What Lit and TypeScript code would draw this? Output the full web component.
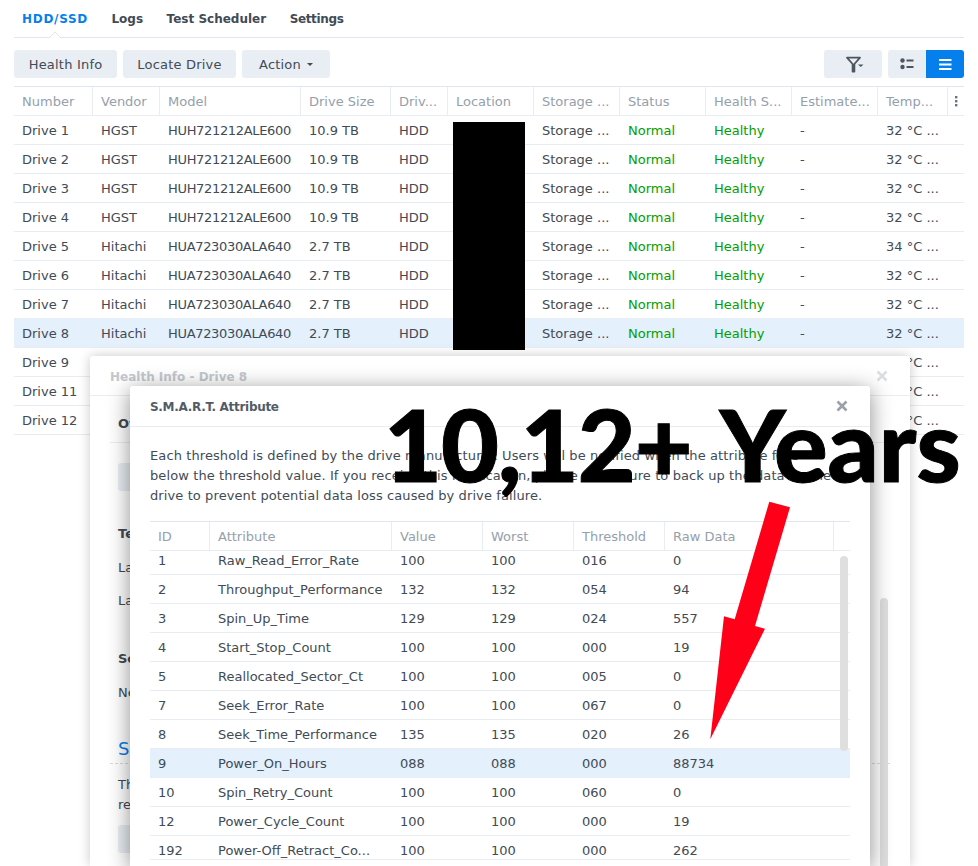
import { LitElement, html, css, svg } from "lit";
import { customElement } from "lit/decorators.js";

const driveRows: string[][] = [
  ["Drive 1","HGST","HUH721212ALE600","10.9 TB","32 °C ..."],
  ["Drive 2","HGST","HUH721212ALE600","10.9 TB","32 °C ..."],
  ["Drive 3","HGST","HUH721212ALE600","10.9 TB","32 °C ..."],
  ["Drive 4","HGST","HUH721212ALE600","10.9 TB","32 °C ..."],
  ["Drive 5","Hitachi","HUA723030ALA640","2.7 TB","34 °C ..."],
  ["Drive 6","Hitachi","HUA723030ALA640","2.7 TB","32 °C ..."],
  ["Drive 7","Hitachi","HUA723030ALA640","2.7 TB","32 °C ..."],
  ["Drive 8","Hitachi","HUA723030ALA640","2.7 TB","32 °C ..."],
  ["Drive 9","Hitachi","HUA723030ALA640","2.7 TB","32 °C ..."],
  ["Drive 11","Hitachi","HUA723030ALA640","2.7 TB","32 °C ..."],
  ["Drive 12","Hitachi","HUA723030ALA640","2.7 TB","32 °C ..."],
];
const driveHead = ["Number","Vendor","Model","Drive Size","Driv...","Location","Storage ...","Status","Health S...","Estimate...","Temp..."];
const attrs: string[][] = [
  ["1","Raw_Read_Error_Rate","100","100","016","0"],
  ["2","Throughput_Performance","132","132","054","94"],
  ["3","Spin_Up_Time","129","129","024","557"],
  ["4","Start_Stop_Count","100","100","000","19"],
  ["5","Reallocated_Sector_Ct","100","100","005","0"],
  ["7","Seek_Error_Rate","100","100","067","0"],
  ["8","Seek_Time_Performance","135","135","020","26"],
  ["9","Power_On_Hours","088","088","000","88734"],
  ["10","Spin_Retry_Count","100","100","060","0"],
  ["12","Power_Cycle_Count","100","100","000","19"],
  ["192","Power-Off_Retract_Co...","100","100","000","262"],
];

const closeIcon = (cls: string) => html`<svg class="x ${cls}" width="12" height="12" viewBox="0 0 12 12"><path d="M1.5 1.5 L10.5 10.5 M10.5 1.5 L1.5 10.5" fill="none" stroke="currentColor" stroke-width="2.6"/></svg>`;

@customElement("app-root")
export class AppRoot extends LitElement {
  static styles = css`
    :host { display: block; position: relative; width: 978px; height: 866px; overflow: hidden; background: #fff;
      font-family: "DejaVu Sans", sans-serif; font-size: 13px; color: #414b55; }
    .page { padding: 0 14px; display: flex; flex-direction: column; }
    .tabs { display: flex; height: 37px; border-bottom: 1px solid #dfe6ee; gap: 23.5px; padding: 0 8px; align-items: center; position: relative; font-weight: 700; font-size: 12px; }
    .tabs .on { color: #057feb; letter-spacing: .7px; }
    .tabs .tight { letter-spacing: -.35px; }
    .notch { position: absolute; left: 35px; bottom: -1px; width: 12px; height: 6px; }
    .bar { display: flex; margin-top: 12px; gap: 6px; height: 28px; }
    .btn { background: #e9eef4; border-radius: 3px; height: 28px; display: flex; align-items: center; justify-content: center; box-sizing: border-box; font-size: 13px; color: #414b55; }
    .wide { letter-spacing: .2px; }
    .spacer { flex: 1; }
    .caret { width: 0; height: 0; border: 3px solid transparent; border-top: 3px solid #414b55; border-bottom: 0; margin-left: 6px; }
    .seg { display: flex; }
    .seg .btn { width: 38px; border-radius: 0; }
    .seg .btn:first-child { border-radius: 3px 0 0 3px; }
    .seg .blue { background: #057feb; border-radius: 0 3px 3px 0; }
    .table { margin-top: 8px; border-top: 1px solid #dfe6ee; }
    .dr { display: grid; grid-template-columns: 79px 67px 141px 90px 57px 86px 86px 86px 86px 86px 70px 16px; height: 29px; border-bottom: 1px solid #e8edf3; box-sizing: border-box; align-items: center; }
    .dr > span { padding-left: 8px; white-space: nowrap; overflow: hidden; }
    .dr > span.model { letter-spacing: -.33px; }
    .dr.head { color: #95a0ab; }
    .dr.head > span { height: 100%; line-height: 30px; border-right: 1px solid #e8edf3; box-sizing: border-box; }
    .dr.head > span.last { border-right: 0; }
    .dots { display: block; margin: 9px 0 0 -1px; }
    .dr.sel { background: #e4f0fc; }
    .ok { color: #00a000; }
    .redact { position: absolute; left: 453px; top: 122px; width: 72px; height: 228px; background: #000; }

    .dlg { position: absolute; background: #fff; box-sizing: border-box; border-radius: 3px 3px 0 0; }
    .back { left: 90px; top: 356px; width: 820px; height: 510px; box-shadow: 0 0 12px rgba(0,0,0,.22); display: flex; flex-direction: column; }
    .back .title { height: 39px; padding-left: 20px; line-height: 42px; font-weight: 700; font-size: 12px; color: #c4c8cc; border-bottom: 1px solid #e8edf3; flex: none; }
    .x { position: absolute; }
    .x-back { left: 786px; top: 14px; color: #dcdfe2; }
    .x-front { left: 706px; top: 14px; color: #9aa1a8; }
    .body { padding: 0 20px; display: flex; flex-direction: column; flex: 1; position: relative; }
    .subtab { height: 46px; line-height: 56px; font-weight: 700; font-size: 13px; border-bottom: 1px solid #e8edf3; padding-left: 8px; flex: none; }
    .sec { padding-left: 8px; display: flex; flex-direction: column; }
    .mt33 { margin-top: 33px; } .mt14 { margin-top: 14px; } .mt13 { margin-top: 13px; } .mt38 { margin-top: 38px; } .mt11 { margin-top: 11px; }
    .ghost { width: 100px; height: 28px; background: #e9eef4; border-radius: 3px; margin: 20px 0 0 8px; flex: none; }
    .ghost.low { margin-top: 10px; }
    .b { font-weight: 700; }
    .heading { color: #057feb; font-size: 18px; line-height: 24px; padding-left: 8px; margin-top: 34px; }
    .dashed { border-top: 1px dashed #d8dcdf; margin-top: 2px; }
    .lnk { display: block; line-height: 20px; }
    .scroll { position: absolute; border-radius: 4px; background: #dfdfdf; width: 8px; }
    .s1 { left: 790px; top: 242px; height: 270px; }

    .front { left: 130px; top: 386px; width: 740px; height: 480px; box-shadow: 0 4px 22px rgba(0,0,0,.45); display: flex; flex-direction: column; }
    .front .title { height: 40px; padding-left: 20px; line-height: 43px; font-weight: 700; font-size: 12px; letter-spacing: -.3px; color: #525c66; border-bottom: 1px solid #e8edf3; flex: none; }
    .para { margin: 19px 20px 0; line-height: 20px; font-size: 13px; letter-spacing: .1px; white-space: nowrap; }
    .attr { margin: 15px 20px 0; border-top: 1px solid #dfe6ee; display: flex; flex-direction: column; position: relative; }
    .ar { display: grid; grid-template-columns: 60px 182px 91px 91px 91px 169px 16px; box-sizing: border-box; height: 29px; border-bottom: 1px solid #e8edf3; align-items: center; flex: none; }
    .ar > span { padding-left: 8px; white-space: nowrap; overflow: hidden; }
    .ar.head { color: #95a0ab; }
    .ar.head > span { height: 100%; line-height: 30px; border-right: 1px solid #e8edf3; box-sizing: border-box; }
    .ar.head > span.last { border-right: 0; }
    .ar.sel { background: #e4f0fc; }
    .clip { height: 308px; overflow: hidden; border-bottom: 1px solid #e8edf3; position: relative; }
    .clip .inner { margin-top: -5px; }
    .s2 { right: 2px; top: 5px; height: 195px; }

    .overlay { position: absolute; left: 384px; top: 383px; font-family: "Lato", sans-serif; font-weight: 900; font-size: 100px; line-height: 120px; color: #000; white-space: nowrap; display: flex; -webkit-text-stroke: 1px #000; }
    .n { letter-spacing: -1px; }
    .y { margin-left: 28px; }
    .arrow { position: absolute; left: 0; top: 0; pointer-events: none; }
  `;

  render() {
    return html`
      <div class="page">
        <div class="tabs">
          <span class="on">HDD/SSD</span><span>Logs</span><span>Test Scheduler</span><span class="tight">Settings</span>
          <svg class="notch" viewBox="0 0 12 6"><path d="M0 6 L6 0 L12 6" fill="#fff" stroke="#dfe6ee"/></svg>
        </div>
        <div class="bar">
          <div class="btn wide" style="width:103px">Health Info</div>
          <div class="btn wide" style="width:113px">Locate Drive</div>
          <div class="btn wide" style="width:88px">Action<i class="caret"></i></div>
          <div class="spacer"></div>
          <div class="btn" style="width:58px">
            <svg width="22" height="18" viewBox="0 0 22 18"><path d="M5 2.7 H18 L12.4 9 V16.5 H10.6 V9 Z" fill="none" stroke="#4c5660" stroke-width="1.8" stroke-linejoin="round"/><path d="M16 9.5 h5.5 l-2.75 2.5 z" fill="#4c5660"/></svg>
          </div>
          <div class="seg">
            <div class="btn">
              <svg width="14" height="12" viewBox="0 0 14 12"><circle cx="2.5" cy="2.5" r="2.2" fill="#4c5660"/><circle cx="2.5" cy="9" r="2.2" fill="#4c5660"/><rect x="6.5" y="1.5" width="7" height="2" fill="#4c5660"/><rect x="6.5" y="8" width="7" height="2" fill="#4c5660"/></svg>
            </div>
            <div class="btn blue">
              <svg width="13" height="11" viewBox="0 0 13 11"><rect width="12.5" height="2" fill="#fff"/><rect y="4.5" width="12.5" height="2" fill="#fff"/><rect y="9" width="12.5" height="2" fill="#fff"/></svg>
            </div>
          </div>
        </div>
        <div class="table">
          <div class="dr head">
            ${driveHead.map((h) => html`<span>${h}</span>`)}
            <span class="last"><svg class="dots" width="3" height="11" viewBox="0 0 3 11"><rect width="2.4" height="2.4" fill="#6b7580"/><rect y="4" width="2.4" height="2.4" fill="#6b7580"/><rect y="8" width="2.4" height="2.4" fill="#6b7580"/></svg></span>
          </div>
          ${driveRows.map((r, i) => html`
            <div class="dr ${i === 7 ? "sel" : ""}">
              <span>${r[0]}</span><span>${r[1]}</span><span class="model">${r[2]}</span><span>${r[3]}</span><span>HDD</span><span></span>
              <span>Storage ...</span><span class="ok">Normal</span><span class="ok">Healthy</span><span>-</span><span>${r[4]}</span><span></span>
            </div>`)}
        </div>
      </div>
      <div class="redact"></div>

      <div class="dlg back">
        <div class="title">Health Info - Drive 8</div>
        ${closeIcon("x-back")}
        <div class="body">
          <div class="subtab">Overview</div>
          <div class="ghost"></div>
          <div class="sec mt33"><span class="b lnk">Temperature</span></div>
          <div class="sec mt14"><span class="lnk">Last</span></div>
          <div class="sec mt13"><span class="lnk">Last</span></div>
          <div class="sec mt38"><span class="b lnk">Self-test</span></div>
          <div class="sec mt14"><span class="lnk">Next</span></div>
          <div class="heading">S.M.A.R.T.</div>
          <div class="dashed"></div>
          <div class="sec mt11"><span class="lnk">This</span><span class="lnk">result</span></div>
          <div class="ghost low"></div>
        </div>
        <div class="scroll s1"></div>
      </div>

      <div class="dlg front">
        <div class="title">S.M.A.R.T. Attribute</div>
        ${closeIcon("x-front")}
        <div class="para">Each threshold is defined by the drive manufacturer. Users will be notified when the attribute falls<br>below the threshold value. If you receive this notification, please make sure to back up the data on the<br>drive to prevent potential data loss caused by drive failure.</div>
        <div class="attr">
          <div class="ar head">
            <span>ID</span><span>Attribute</span><span>Value</span><span>Worst</span><span>Threshold</span><span>Raw Data</span><span class="last"></span>
          </div>
          <div class="clip">
            <div class="inner">
              ${attrs.map((r, i) => html`
                <div class="ar ${i === 7 ? "sel" : ""}">${r.map((c) => html`<span>${c}</span>`)}<span></span></div>`)}
            </div>
            <div class="scroll s2"></div>
          </div>
        </div>
      </div>

      <div class="overlay"><span class="n">10,12+</span><span class="y">Years</span></div>
      <svg class="arrow" width="978" height="866" viewBox="0 0 978 866">
        ${svg`<polygon points="769.3,501.7 790,507.3 755,626 765,628.7 710.3,739.3 724,616.3 734.7,619.3" fill="#ff0019"/>`}
      </svg>
    `;
  }
}
